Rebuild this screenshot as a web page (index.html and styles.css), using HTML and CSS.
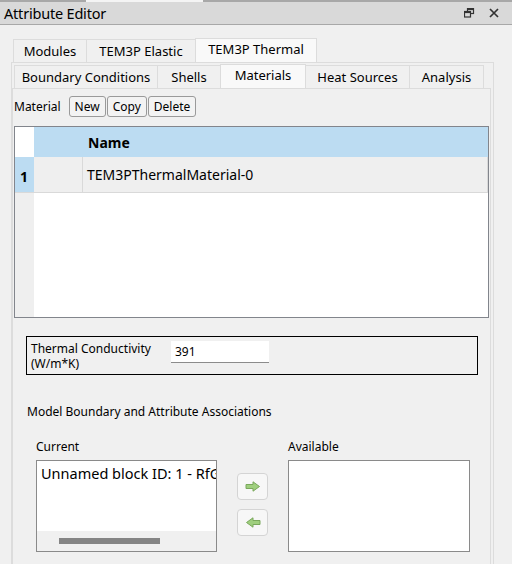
FILE: index.html
```html
<!DOCTYPE html>
<html lang="en">
<head>
    <meta charset="UTF-8">
    <title>Attribute Editor</title>
    <link rel="stylesheet" href="styles.css">
</head>
<body>
    <div class="top-strip"><span class="top-seg"></span></div>
    <header class="titlebar">
        <span class="title">Attribute Editor</span>
        <span class="title-icons">
            <svg width="11" height="10" viewBox="0 0 11 10">
                <rect x="3.5" y="0.5" width="6" height="5" fill="none" stroke="#333" stroke-width="1.2"/>
                <rect x="3.5" y="0.5" width="6" height="1.6" fill="#333"/>
                <rect x="0.5" y="3.5" width="6" height="5.5" fill="#d9d9d9" stroke="#333" stroke-width="1.2"/>
                <rect x="0.5" y="3.5" width="6" height="1.6" fill="#333"/>
            </svg>
            <svg width="10" height="10" viewBox="0 0 10 10">
                <path d="M1 1 L9 9 M9 1 L1 9" stroke="#333" stroke-width="1.7"/>
            </svg>
        </span>
    </header>

    <main class="editor">
        <nav class="tabs outer-tabs">
            <span class="tab">Modules</span>
            <span class="tab">TEM3P Elastic</span>
            <span class="tab active">TEM3P Thermal</span>
        </nav>
        <section class="outer-pane">
            <nav class="tabs inner-tabs">
                <span class="tab">Boundary Conditions</span>
                <span class="tab">Shells</span>
                <span class="tab active">Materials</span>
                <span class="tab">Heat Sources</span>
                <span class="tab">Analysis</span>
            </nav>
            <section class="inner-pane">
                <div class="toolbar">
                    <span class="toolbar-label">Material</span>
                    <button class="btn">New</button>
                    <button class="btn">Copy</button>
                    <button class="btn">Delete</button>
                </div>

                <div class="table">
                    <div class="row head-row">
                        <span class="row-head corner"></span>
                        <span class="cell col-a"></span>
                        <span class="cell col-b">Name</span>
                    </div>
                    <div class="row data-row">
                        <span class="row-head">1</span>
                        <span class="cell col-a"></span>
                        <span class="cell col-b">TEM3PThermalMaterial-0</span>
                    </div>
                    <div class="row empty-row">
                        <span class="row-head blank"></span>
                    </div>
                </div>

                <div class="prop-box">
                    <span class="prop-label">Thermal Conductivity<br>(W/m*K)</span>
                    <span class="prop-input">391</span>
                </div>

                <div class="assoc-title">Model Boundary and Attribute Associations</div>

                <div class="assoc">
                    <div class="assoc-col">
                        <span class="assoc-label">Current</span>
                        <div class="list current-list">
                            <div class="list-item">Unnamed block ID: 1 - RfG</div>
                            <div class="hscroll"><span class="hthumb"></span></div>
                        </div>
                    </div>
                    <div class="arrows">
                        <button class="arrow-btn">
                            <svg width="16" height="11" viewBox="0 0 16 11">
                                <path d="M1 3.5 H8 V0.8 L14.5 5.5 L8 10.2 V7.5 H1 Z" fill="#9fcf7e" stroke="#7aa85c" stroke-width="1"/>
                            </svg>
                        </button>
                        <button class="arrow-btn">
                            <svg width="16" height="11" viewBox="0 0 16 11">
                                <path d="M15 3.5 H8 V0.8 L1.5 5.5 L8 10.2 V7.5 H15 Z" fill="#9fcf7e" stroke="#7aa85c" stroke-width="1"/>
                            </svg>
                        </button>
                    </div>
                    <div class="assoc-col">
                        <span class="assoc-label">Available</span>
                        <div class="list available-list"></div>
                    </div>
                </div>
            </section>
        </section>
    </main>
</body>
</html>
```

FILE: styles.css
```css
/*
* Editor de atributos, estilo ventana Qt
*/
body {
    margin: 0;
    background-color: #f0f0f0;
    font-family: "Noto Sans", "Open Sans", sans-serif;
    color: #000000;
    width: 512px;
    height: 564px;
    overflow: hidden;
}
.top-strip {
    height: 2px;
    background-color: #a8a8a8;
    padding-left: 86px;
}
.top-seg {
    display: block;
    width: 117px;
    height: 2px;
    background-color: #f4f4f4;
}
.titlebar {
    height: 22px;
    background-color: #d9d9d9;
    border-bottom: 1px solid #a8a8a8;
    display: flex;
    align-items: center;
    justify-content: space-between;
    padding-left: 4px;
    padding-right: 13px;
}
.title {
    font-size: 14.5px;
    letter-spacing: -0.2px;
}
.title-icons {
    display: flex;
    gap: 14px;
    align-items: center;
}
.editor {
    padding: 13px 18px 0 11px;
}
.tabs {
    display: flex;
    align-items: flex-end;
}
.tab {
    font-size: 13px;
    height: 22px;
    line-height: 22px;
    border: 1px solid #dcdcdc;
    border-bottom: 0;
    margin-right: -1px;
    background-color: #f0f0f0;
    padding: 0;
    text-align: center;
}
.tab.active {
    background-color: #f9f9f9;
    height: 23px;
    line-height: 21px;
    position: relative;
    z-index: 1;
}
.outer-tabs {
    padding-left: 2px;
}
.outer-tabs .tab:nth-child(1) { width: 72px; }
.outer-tabs .tab:nth-child(2) { width: 108px; }
.outer-tabs .tab:nth-child(3) { width: 120px; }
.outer-pane {
    border: 1px solid #dcdcdc;
    height: 520px;
    padding: 1px 2px 0 0;
}
.inner-tabs {
    padding-left: 2px;
}
.inner-tabs .tab:nth-child(1) { width: 142px; }
.inner-tabs .tab:nth-child(2) { width: 62px; }
.inner-tabs .tab:nth-child(3) { width: 84px; }
.inner-tabs .tab:nth-child(4) { width: 103px; }
.inner-tabs .tab:nth-child(5) { width: 73px; }
.inner-pane {
    border: 1px solid #dcdcdc;
    border-bottom: 0;
    height: 480px;
    padding: 0 0 0 1px;
}
.toolbar {
    display: flex;
    align-items: center;
    height: 21px;
    margin-top: 7px;
    font-size: 12px;
}
.toolbar-label {
    margin-right: 8px;
}
.btn {
    font-family: inherit;
    font-size: 12px;
    height: 21px;
    padding: 0 5px;
    margin: 0 1px 0 0;
    background-color: #f3f3f3;
    border: 1px solid #9a9a9a;
    border-radius: 3px;
    color: #000000;
}
.table {
    margin-top: 9px;
    margin-right: 1px;
    height: 190px;
    border: 1px solid #82858c;
    background-color: #ffffff;
    display: flex;
    flex-direction: column;
}
.row {
    display: flex;
}
.head-row {
    height: 30px;
    background-color: #bcdcf2;
}
.data-row {
    height: 35px;
    background-color: #efefef;
    border-bottom: 1px solid #d9d9d9;
}
.empty-row {
    flex: 1;
}
.row-head {
    width: 19px;
    background-color: #bcdcf2;
    font-size: 14px;
    font-weight: bold;
    padding-left: 5px;
    box-sizing: border-box;
    display: flex;
    align-items: center;
    padding-top: 4px;
}
.row-head.corner {
    background-color: #ffffff;
}
.row-head.blank {
    background-color: #efefef;
}
.cell {
    display: flex;
    align-items: center;
    font-size: 14px;
}
.col-a {
    width: 48px;
}
.data-row .col-a {
    border-right: 1px solid #d9d9d9;
}
.col-b {
    flex: 1;
    padding-left: 4px;
    border-right: 1px solid #d9d9d9;
}
.head-row .col-b {
    font-weight: bold;
    padding-left: 6px;
    border-right: 0;
}
.prop-box {
    margin: 18px 12px 0 12px;
    height: 37px;
    border: 1px solid #000000;
    display: flex;
    align-items: flex-start;
    font-size: 12px;
}
.prop-label {
    width: 140px;
    padding: 4px 0 0 4px;
    line-height: 15px;
}
.prop-input {
    margin-top: 4px;
    width: 94px;
    height: 21px;
    line-height: 21px;
    padding-left: 4px;
    background-color: #ffffff;
    border-bottom: 1px solid #8c8c8c;
    font-size: 12px;
}
.assoc-title {
    font-size: 12px;
    margin: 28px 0 0 13px;
}
.assoc {
    display: flex;
    margin: 19px 0 0 22px;
}
.assoc-col {
    display: flex;
    flex-direction: column;
}
.assoc-label {
    font-size: 12px;
    height: 21px;
    line-height: 16px;
}
.list {
    border: 1px solid #8a8a8a;
    background-color: #ffffff;
    box-sizing: border-box;
    height: 92px;
    overflow: hidden;
}
.current-list {
    width: 181px;
    display: flex;
    flex-direction: column;
}
.available-list {
    width: 182px;
}
.list-item {
    flex: 1;
    font-size: 14.5px;
    padding: 2px 0 0 4px;
    white-space: nowrap;
    overflow: hidden;
}
.hscroll {
    height: 20px;
    background-color: #f0f0f0;
    padding: 7px 0 0 22px;
    box-sizing: border-box;
}
.hthumb {
    display: block;
    width: 101px;
    height: 6px;
    background-color: #858585;
}
.arrows {
    display: flex;
    flex-direction: column;
    gap: 9px;
    margin: 34px 20px 0 20px;
}
.arrow-btn {
    width: 31px;
    height: 27px;
    padding: 0;
    background-color: #f7f7f7;
    border: 1px solid #d4d4d4;
    border-radius: 4px;
    display: flex;
    align-items: center;
    justify-content: center;
}
```
